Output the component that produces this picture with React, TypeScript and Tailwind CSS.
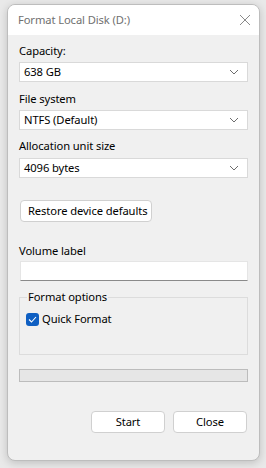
import React from "react";

const Chevron = () => (
  <svg width="10" height="6" viewBox="0 0 10 6" className="shrink-0">
    <path d="M1 1 L5 5 L9 1" fill="none" stroke="#6d6d6d" strokeWidth="1" />
  </svg>
);

const Combo = ({ value }: { value: string }) => (
  <div className="flex h-[20px] items-center justify-between border border-[#d9d9d9] bg-white pl-[4px] pr-[8px] text-black">
    <span>{value}</span>
    <Chevron />
  </div>
);

export default function App() {
  return (
    <div
      className="flex h-[468px] w-[266px] items-start bg-[#e9e9e9] pl-[7px] pt-[4px] text-[11.2px] tracking-[-0.1px]"
      style={{ fontFamily: '"Segoe UI", "Noto Sans", sans-serif' }}
    >
      <div className="flex h-[457px] w-[253px] flex-col overflow-hidden rounded-[8px] border border-[#bdbdbd] bg-[#f0f0f0] shadow-[0_2px_8px_rgba(0,0,0,0.18)]">
        <div className="flex h-[30px] shrink-0 items-center justify-between bg-white pl-[10px] pr-[8px]">
          <span className="text-[#707070]">Format Local Disk (D:)</span>
          <svg width="12" height="12" viewBox="0 0 12 12">
            <path d="M1 1 L11 11 M11 1 L1 11" stroke="#8a8a8a" strokeWidth="1" />
          </svg>
        </div>
        <div className="flex flex-1 flex-col px-[11px] text-black">
          <div className="mt-[8px] leading-[16px]">Capacity:</div>
          <div className="mt-[3px]">
            <Combo value="638 GB" />
          </div>
          <div className="mt-[9px] leading-[16px]">File system</div>
          <div className="mt-[3px]">
            <Combo value="NTFS (Default)" />
          </div>
          <div className="mt-[8px] leading-[16px]">Allocation unit size</div>
          <div className="mt-[4px]">
            <Combo value="4096 bytes" />
          </div>
          <div className="mt-[22px] flex">
            <button className="ml-[1px] flex h-[22px] w-[132px] items-center justify-start rounded-[4px] border border-[#d0d0d0] bg-white pl-[7px] text-black">
              Restore device defaults
            </button>
          </div>
          <div className="mt-[21px] leading-[16px]">Volume label</div>
          <div className="mt-[2px] ml-[1px] h-[20px] border border-[#e5e5e5] border-b-[#8a8a8a] bg-white" />
          <div className="relative mt-[16px] h-[58px] border border-[#dcdcdc]">
            <span className="absolute left-[7px] top-[-9px] bg-[#f0f0f0] px-[1px] leading-[16px]">
              Format options
            </span>
            <div className="mt-[13px] ml-[6px] flex items-center gap-[3px]">
              <div className="flex h-[13px] w-[13px] items-center justify-center rounded-[3px] bg-[#0f5fc2]">
                <svg width="9" height="7" viewBox="0 0 9 7">
                  <path d="M1 3.5 L3.5 6 L8 1" fill="none" stroke="white" strokeWidth="1.1" />
                </svg>
              </div>
              <span className="leading-[16px]">Quick Format</span>
            </div>
          </div>
          <div className="mt-[14px] h-[13px] border border-[#bcbcbc] bg-[#e6e6e6]" />
          <div className="mt-[29px] flex justify-end gap-[8px] pr-[1px]">
            <button className="flex h-[22px] w-[74px] items-center justify-center rounded-[4px] border border-[#d0d0d0] bg-white">
              Start
            </button>
            <button className="flex h-[22px] w-[74px] items-center justify-center rounded-[4px] border border-[#d0d0d0] bg-white">
              Close
            </button>
          </div>
        </div>
      </div>
    </div>
  );
}
